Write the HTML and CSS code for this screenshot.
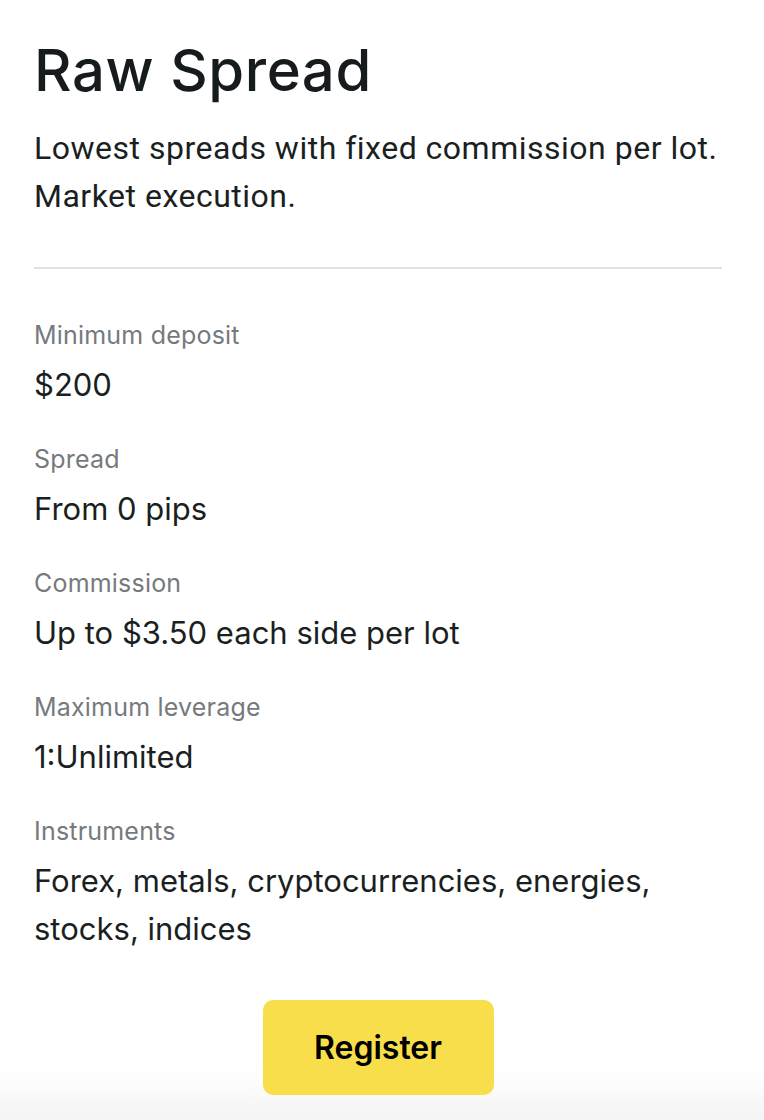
FILE: index.html
```html
<!DOCTYPE html>
<html lang="en">
<head>
    <meta charset="UTF-8">
    <meta name="viewport" content="width=device-width, initial-scale=1.0">
    <title>Raw Spread</title>
    <link rel="stylesheet" href="styles.css">
</head>
<body>
    <div class="account">
        <h1 class="title">Raw Spread</h1>
        <p class="intro">Lowest spreads with fixed commission per lot. Market execution.</p>
        <hr class="divider">

        <dl class="specs">
            <div class="spec">
                <dt>Minimum deposit</dt>
                <dd>$200</dd>
            </div>
            <div class="spec">
                <dt>Spread</dt>
                <dd>From 0 pips</dd>
            </div>
            <div class="spec">
                <dt>Commission</dt>
                <dd>Up to $3.50 each side per lot</dd>
            </div>
            <div class="spec">
                <dt>Maximum leverage</dt>
                <dd>1:Unlimited</dd>
            </div>
            <div class="spec">
                <dt>Instruments</dt>
                <dd>Forex, metals, cryptocurrencies, energies, stocks, indices</dd>
            </div>
        </dl>

        <div class="actions">
            <button class="register">Register</button>
        </div>
    </div>
</body>
</html>
```

FILE: styles.css
```css
body {
    margin: 0;
    font-family: Roboto, "Liberation Sans", sans-serif;
    color: #1a1f22;
    background: linear-gradient(to bottom, #ffffff 0, #ffffff 1070px, #f4f4f4 1120px);
    min-height: 1120px;
}

.account {
    padding: 0 42px 0 34px;
}

.title {
    margin: 0;
    padding-top: 36px;
    font-family: Inter, sans-serif;
    font-size: 58px;
    font-weight: 500;
    line-height: 68px;
    letter-spacing: 0.6px;
    color: #161b1e;
}

.intro {
    margin: 20px 0 0;
    font-size: 32px;
    line-height: 48px;
    letter-spacing: 0.5px;
}

.divider {
    margin: 47px 0 0;
    border: none;
    border-top: 2px solid #e3e3e3;
}

.specs {
    margin: 49px 0 0;
}

.spec {
    margin-bottom: 33px;
}

.spec dt {
    font-family: Inter, sans-serif;
    font-size: 25px;
    line-height: 34px;
    letter-spacing: 0.2px;
    color: #767a7e;
}

.spec dd {
    margin: 9px 0 0;
    font-family: Inter, sans-serif;
    font-size: 31px;
    line-height: 48px;
}

.actions {
    display: flex;
    justify-content: center;
    padding-top: 14px;
}

.register {
    width: 231px;
    height: 95px;
    border: none;
    border-radius: 10px;
    background-color: #f9de4b;
    font-family: Inter, sans-serif;
    font-size: 32px;
    font-weight: 600;
    color: #000;
    cursor: pointer;
}
```
